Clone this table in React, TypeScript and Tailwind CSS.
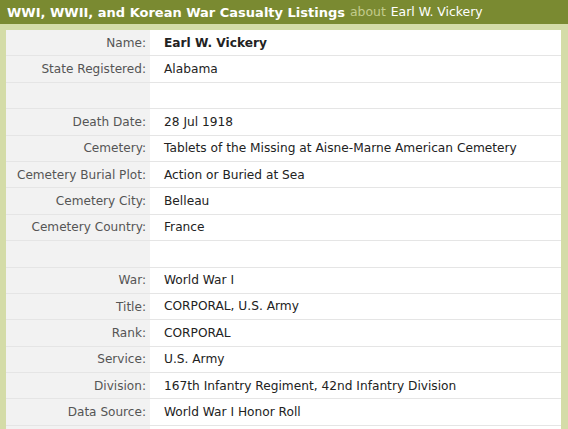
import React from "react";

const rows: [string, string, boolean?][] = [
  ["Name:", "Earl W. Vickery", true],
  ["State Registered:", "Alabama"],
  ["", ""],
  ["Death Date:", "28 Jul 1918"],
  ["Cemetery:", "Tablets of the Missing at Aisne-Marne American Cemetery"],
  ["Cemetery Burial Plot:", "Action or Buried at Sea"],
  ["Cemetery City:", "Belleau"],
  ["Cemetery Country:", "France"],
  ["", ""],
  ["War:", "World War I"],
  ["Title:", "CORPORAL, U.S. Army"],
  ["Rank:", "CORPORAL"],
  ["Service:", "U.S. Army"],
  ["Division:", "167th Infantry Regiment, 42nd Infantry Division"],
  ["Data Source:", "World War I Honor Roll"],
  ["", ""],
];

export default function App() {
  return (
    <div
      className="w-[568px] h-[429px] overflow-hidden bg-[#d4dca8]"
      style={{ fontFamily: '"DejaVu Sans", Verdana, sans-serif' }}
    >
      <div className="h-[24px] bg-[#7a8a31] flex items-center pl-[7px] leading-none whitespace-nowrap">
        <span className="font-bold text-white text-[13px]">
          WWI, WWII, and Korean War Casualty Listings
        </span>
        <span className="text-[#c3cc8c] ml-[5px] text-[12.4px]">about</span>
        <span className="text-white ml-[5px] text-[12.4px]">Earl W. Vickery</span>
      </div>
      <div className="pt-[6px] pl-[6px] pr-[7px]">
        <div className="bg-white">
          {rows.map(([label, value, bold], i) => (
            <div key={i} className="flex h-[26.4px] border-b border-[#e5e5e5]">
              <div className="w-[144px] shrink-0 bg-[#f2f2f2] flex items-center justify-end pr-[4px] text-[12.1px] text-[#555]">
                {label}
              </div>
              <div
                className={`flex-1 flex items-center pl-[14px] text-[12.2px] text-[#222] ${
                  bold ? "font-bold" : ""
                }`}
              >
                {value}
              </div>
            </div>
          ))}
        </div>
      </div>
    </div>
  );
}
